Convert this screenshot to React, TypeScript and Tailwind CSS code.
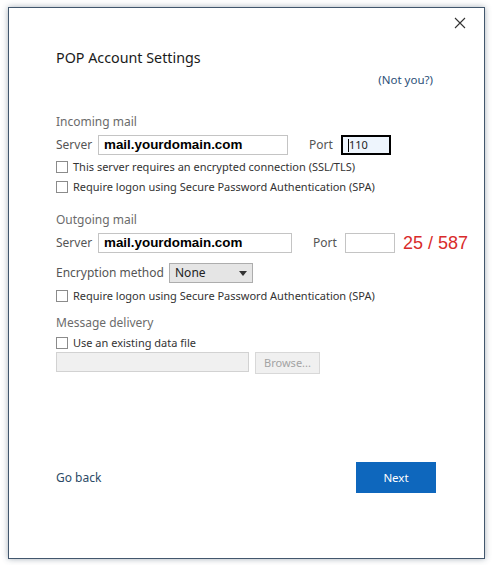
const UI = { fontFamily: '"Noto Sans", "Open Sans", sans-serif' }
const ARIAL = { fontFamily: '"Liberation Sans", Arial, sans-serif' }

function Check({ label }: { label: string }) {
  return (
    <div className="flex h-[16px] items-center gap-[5px] whitespace-nowrap">
      <span className="h-[12px] w-[12px] shrink-0 border border-[#8b8b8b] bg-white" />
      <span className="text-[11px] text-[#333]">{label}</span>
    </div>
  )
}

function ServerRow({ outgoing }: { outgoing?: boolean }) {
  return (
    <div className="flex h-[20px] items-center whitespace-nowrap">
      <span className="w-[42px] shrink-0 text-[12px] text-[#555]">Server</span>
      <div
        className={`flex h-[20px] shrink-0 items-center border border-[#c4c4c4] pl-[5px] ${outgoing ? 'w-[194px]' : 'w-[190px]'}`}
      >
        <span className="text-[13.4px] font-bold text-black" style={ARIAL}>
          mail.yourdomain.com
        </span>
      </div>
      <span className="ml-[21px] w-[32px] shrink-0 text-[12px] text-[#555]">Port</span>
      {outgoing ? (
        <div className="h-[20px] w-[50px] shrink-0 border border-[#c4c4c4]" />
      ) : (
        <div className="flex h-[20px] w-[50px] shrink-0 items-center border-2 border-black bg-[#eef5fd] pl-[5px]">
          <span className="h-[13px] w-px bg-black" />
          <span className="text-[11px] text-[#222]">110</span>
        </div>
      )}
      {outgoing && (
        <span className="ml-[8px] shrink-0 text-[18px] text-[#d92b2b]" style={ARIAL}>
          25 / 587
        </span>
      )}
    </div>
  )
}

export default function App() {
  return (
    <div className="h-[565px] w-[492px] overflow-hidden bg-white pl-[8px] pt-[7px]" style={UI}>
      <div className="flex h-[552px] w-[477px] flex-col border border-[#42576d] bg-white pl-[47px] pr-[51px] shadow-[0_0_6px_rgba(60,80,100,0.45)]">
        {/* close */}
        <div className="-mr-[33px] flex h-[30px] items-center justify-end">
          <svg width="12" height="12" viewBox="0 0 12 12" className="text-[#333]">
            <path d="M1 1 L11 11 M11 1 L1 11" stroke="currentColor" strokeWidth="1.1" />
          </svg>
        </div>

        <div className="mt-[10px] flex h-[20px] items-center text-[14.3px] text-[#1a1a1a]">POP Account Settings</div>
        <div className="mt-[4px] flex h-[16px] items-center justify-end text-[11.5px] text-[#2b4f78]">(Not you?)</div>

        <div className="mt-[26px] flex h-[16px] items-center text-[12px] text-[#6b6b6b]">Incoming mail</div>
        <div className="mt-[5px]">
          <ServerRow />
        </div>
        <div className="mt-[4px]">
          <Check label="This server requires an encrypted connection (SSL/TLS)" />
        </div>
        <div className="mt-[4px]">
          <Check label="Require logon using Secure Password Authentication (SPA)" />
        </div>

        <div className="mt-[17px] flex h-[16px] items-center text-[12px] text-[#6b6b6b]">Outgoing mail</div>
        <div className="mt-[5px]">
          <ServerRow outgoing />
        </div>

        <div className="mt-[10px] flex h-[20px] items-center">
          <span className="w-[113px] shrink-0 text-[12px] text-[#555]">Encryption method</span>
          <div className="flex h-[20px] w-[84px] items-center justify-between border border-[#adadad] bg-[#e5e5e5] pl-[5px] pr-[5px]">
            <span className="text-[12px] text-[#222]">None</span>
            <svg width="8" height="5" viewBox="0 0 8 5">
              <path d="M0 0 H8 L4 5 Z" fill="#333" />
            </svg>
          </div>
        </div>
        <div className="mt-[5px]">
          <Check label="Require logon using Secure Password Authentication (SPA)" />
        </div>

        <div className="mt-[11px] flex h-[16px] items-center text-[12px] text-[#6b6b6b]">Message delivery</div>
        <div className="mt-[4px]">
          <Check label="Use an existing data file" />
        </div>
        <div className="mt-[1px] flex h-[22px] items-start gap-[6px]">
          <div className="h-[20px] w-[193px] border border-[#d2d2d2] bg-[#f0f0f0]" />
          <div className="flex h-[22px] w-[65px] items-center justify-center border border-[#d8d8d8] bg-[#f0f0f0] text-[11px] text-[#a3a3a3]">
            Browse...
          </div>
        </div>

        <div className="mt-[88px] flex h-[31px] items-center justify-between">
          <span className="text-[12px] text-[#2c4a66]">Go back</span>
          <div className="-mr-[3px] flex h-[31px] w-[80px] items-center justify-center bg-[#0e67bd] text-[11.5px] text-white">
            Next
          </div>
        </div>
      </div>
    </div>
  )
}
